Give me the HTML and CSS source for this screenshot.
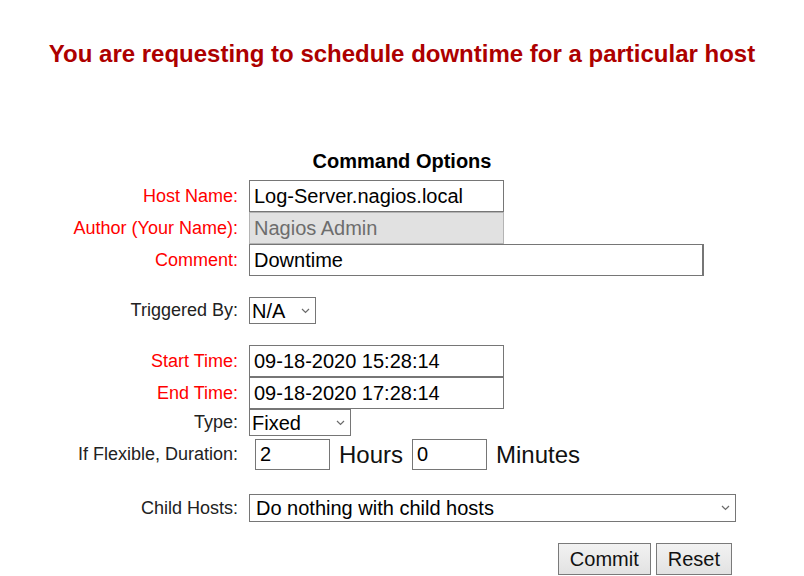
FILE: index.html
```html
<!DOCTYPE html>
<html>
<head>
<meta charset="utf-8">
<link rel="stylesheet" href="styles.css">
</head>
<body>
<h1 class="title">You are requesting to schedule downtime for a particular host</h1>
<form class="cmd">
  <div class="head">Command Options</div>

  <label class="lbl req">Host Name:</label>
  <div class="ctl"><input class="txt w-host" type="text" value="Log-Server.nagios.local"></div>

  <label class="lbl req">Author (Your Name):</label>
  <div class="ctl"><input class="txt w-host" type="text" value="Nagios Admin" disabled></div>

  <label class="lbl req">Comment:</label>
  <div class="ctl"><input class="txt w-comment" type="text" value="Downtime"></div>

  <div class="gap"></div>

  <label class="lbl">Triggered By:</label>
  <div class="ctl"><span class="sel w-trig"><select><option>N/A</option></select><svg class="chev" width="9" height="6" viewBox="0 0 9 6"><path d="M1 1l3.5 3.5L8 1" fill="none" stroke="#6b6b6b" stroke-width="1.2"/></svg></span></div>

  <div class="gap"></div>

  <label class="lbl req">Start Time:</label>
  <div class="ctl"><input class="txt w-host" type="text" value="09-18-2020 15:28:14"></div>

  <label class="lbl req">End Time:</label>
  <div class="ctl"><input class="txt w-host" type="text" value="09-18-2020 17:28:14"></div>

  <label class="lbl">Type:</label>
  <div class="ctl"><span class="sel w-type"><select><option>Fixed</option><option>Flexible</option></select><svg class="chev" width="9" height="6" viewBox="0 0 9 6"><path d="M1 1l3.5 3.5L8 1" fill="none" stroke="#6b6b6b" stroke-width="1.2"/></svg></span></div>

  <label class="lbl">If Flexible, Duration:</label>
  <div class="ctl dur"><input class="txt small first" type="text" value="2"><span class="unit">Hours</span><input class="txt small" type="text" value="0"><span class="unit">Minutes</span></div>

  <div class="gap"></div>

  <label class="lbl">Child Hosts:</label>
  <div class="ctl"><span class="sel w-child"><select><option>Do nothing with child hosts</option></select><svg class="chev" width="9" height="6" viewBox="0 0 9 6"><path d="M1 1l3.5 3.5L8 1" fill="none" stroke="#6b6b6b" stroke-width="1.2"/></svg></span></div>

  <div class="gap"></div>

  <div class="lbl"></div>
  <div class="ctl btns"><button type="button" class="btn">Commit</button><button type="button" class="btn">Reset</button></div>
</form>
</body>
</html>
```
FILE: styles.css
```css
html, body {
  margin: 0;
  padding: 0;
  background: #ffffff;
}
body {
  font-family: "Liberation Sans", Arial, sans-serif;
  color: #000;
}
.title {
  margin: 40px 0 0 0;
  font-size: 24px;
  font-weight: bold;
  color: #ad0000;
  text-align: center;
  line-height: normal;
}
.cmd {
  margin-top: 82px;
  display: grid;
  grid-template-columns: 238px 1fr;
  column-gap: 11px;
  align-items: center;
}
.head {
  grid-column: 1 / -1;
  text-align: center;
  font-size: 20px;
  font-weight: bold;
  color: #000;
  margin-bottom: 7px;
}
.gap {
  grid-column: 1 / -1;
  height: 21px;
}
.lbl {
  text-align: right;
  font-size: 18px;
  color: #222;
  white-space: nowrap;
}
.lbl.req {
  color: #ff0000;
}
.ctl {
  display: flex;
  align-items: center;
}
.txt {
  box-sizing: border-box;
  height: 32px;
  margin: 0;
  padding: 0 4px;
  border: 1px solid #767676;
  background: #fff;
  font-family: "Liberation Sans", Arial, sans-serif;
  font-size: 20px;
  color: #000;
  border-radius: 0;
  outline: none;
}
.txt:disabled {
  background: #e1e1e1;
  border-color: #b4b4b4;
  color: #6d6d6d;
}
.w-host { width: 255px; }
.w-comment { width: 455px; border-right-width: 2px; }
.dur {
  height: 37px;
}
.txt.small {
  width: 75px;
  height: 31px;
  padding: 0 4px;
}
.txt.first {
  margin-left: 6px;
}
.unit {
  font-size: 24px;
  color: #111;
  margin: 0 9px 0 9px;
}
.sel {
  position: relative;
  display: inline-block;
}
.sel select {
  -webkit-appearance: none;
  appearance: none;
  box-sizing: border-box;
  width: 100%;
  height: 27px;
  margin: 0;
  padding: 0 0 0 2px;
  border: 1px solid #767676;
  border-radius: 0;
  background: #fff;
  font-family: "Liberation Sans", Arial, sans-serif;
  font-size: 20px;
  color: #000;
  outline: none;
}
.sel .chev {
  position: absolute;
  right: 6px;
  top: 11px;
  pointer-events: none;
}
.w-trig { width: 67px; }
.w-type { width: 102px; }
.w-child { width: 487px; }
.w-child select { height: 28px; padding-left: 6px; }
.btns {
  width: 487px;
  justify-content: flex-end;
  gap: 5px;
  padding-right: 4px;
  box-sizing: border-box;
}
.btn {
  box-sizing: border-box;
  height: 32px;
  margin: 0;
  padding: 0 11px;
  border: 1px solid #7a7a7a;
  border-radius: 0;
  background: linear-gradient(#f2f2f2, #e2e2e2);
  font-family: "Liberation Sans", Arial, sans-serif;
  font-size: 20px;
  color: #111;
}
```
